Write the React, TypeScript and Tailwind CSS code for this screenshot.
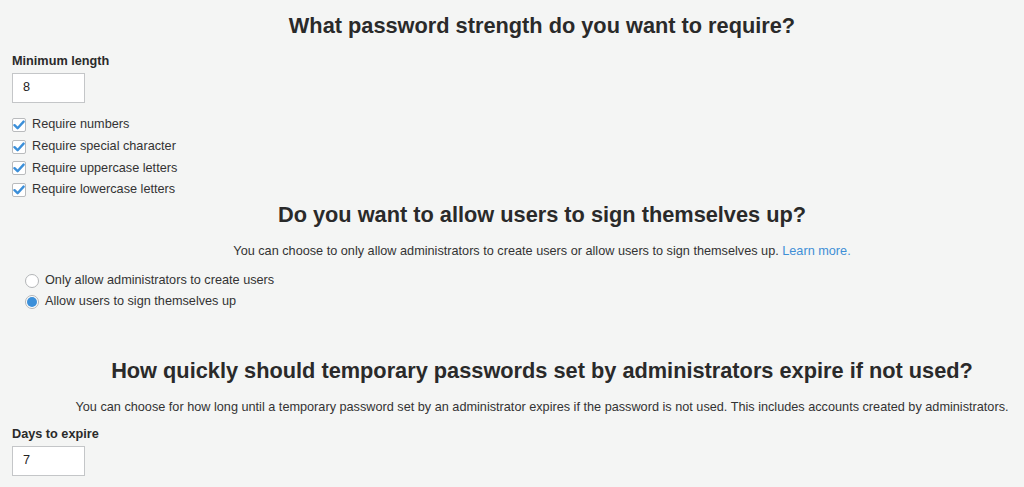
import { useState } from 'react';

const checks = [
  'Require numbers',
  'Require special character',
  'Require uppercase letters',
  'Require lowercase letters',
];

function CheckBox({ checked }: { checked: boolean }) {
  return (
    <span className="w-[14px] h-[14px] bg-white border border-[#b9bbbd] rounded-[2px] flex items-center justify-center shrink-0">
      {checked && (
        <svg width="12" height="10" viewBox="0 0 12 10">
          <path d="M1.5 5.2L4.6 8.2L10.6 1.6" fill="none" stroke="#3b8fd9" strokeWidth="2.4" strokeLinecap="round" strokeLinejoin="round" />
        </svg>
      )}
    </span>
  );
}

function Radio({ checked }: { checked: boolean }) {
  return (
    <span className="w-[14px] h-[14px] rounded-full bg-white border border-[#b3b5b7] flex items-center justify-center shrink-0">
      {checked && <span className="w-[10px] h-[10px] rounded-full bg-[#3b8fd9]" />}
    </span>
  );
}

export default function App() {
  const [signup, setSignup] = useState(1);

  return (
    <div className="w-[1024px] h-[487px] overflow-hidden bg-[#f4f5f4] text-[#333] font-['Liberation_Sans',Arial,sans-serif] text-[12.7px]">
      <div className="pl-[60px]">
        <h1 className="mt-[13px] leading-[26px] text-[21.75px] font-bold text-center text-[#2a2a2a]">
          What password strength do you want to require?
        </h1>
      </div>

      <div className="pl-[12px]">
        <div className="mt-[14px] leading-[16px] font-bold text-[#2a2a2a]">Minimum length</div>
        <div className="mt-[4px] w-[73px] h-[30px] bg-white border border-[#c4c6c8] flex items-center pl-[10px] text-[#222]">8</div>

        <div className="mt-[11px]">
          {checks.map((c) => (
            <div key={c} className="h-[21.7px] flex items-center gap-[6px]">
              <CheckBox checked={true} />
              <span>{c}</span>
            </div>
          ))}
        </div>
      </div>

      <div className="pl-[60px]">
        <h2 className="mt-[1px] leading-[26px] text-[21.75px] font-bold text-center text-[#2a2a2a]">
          Do you want to allow users to sign themselves up?
        </h2>
        <p className="mt-[15px] leading-[16px] text-center">
          You can choose to only allow administrators to create users or allow users to sign themselves up.{' '}
          <a className="text-[#3f8fd6]">Learn more.</a>
        </p>
      </div>

      <div className="pl-[25px] mt-[11.5px]">
        {['Only allow administrators to create users', 'Allow users to sign themselves up'].map((r, i) => (
          <div key={r} className="h-[21px] flex items-center gap-[6px] cursor-pointer" onClick={() => setSignup(i)}>
            <Radio checked={signup === i} />
            <span>{r}</span>
          </div>
        ))}
      </div>

      <div className="pl-[60px]">
        <h2 className="mt-[45.5px] leading-[26px] text-[21.75px] font-bold text-center text-[#2a2a2a]">
          How quickly should temporary passwords set by administrators expire if not used?
        </h2>
        <p className="mt-[15px] leading-[16px] text-center">
          You can choose for how long until a temporary password set by an administrator expires if the password is not used. This includes accounts created by administrators.
        </p>
      </div>

      <div className="pl-[12px]">
        <div className="mt-[11px] leading-[16px] font-bold text-[#2a2a2a]">Days to expire</div>
        <div className="mt-[4px] w-[73px] h-[30px] bg-white border border-[#c4c6c8] flex items-center pl-[10px] text-[#222]">7</div>
      </div>
    </div>
  );
}
